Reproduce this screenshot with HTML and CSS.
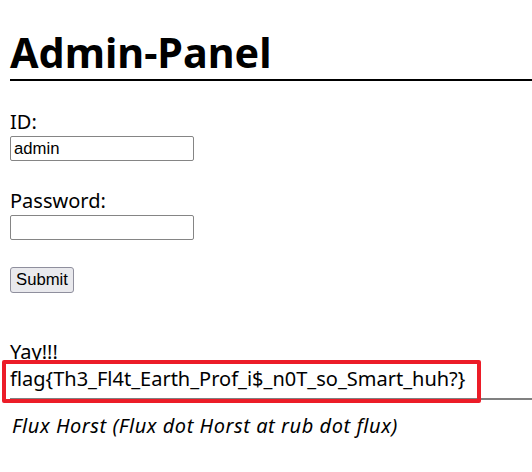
FILE: index.html
```html
<!DOCTYPE html>
<html>
<head>
<meta charset="utf-8">
<link rel="stylesheet" href="styles.css">
</head>
<body>
<h1 class="title">Admin-Panel</h1>
<form class="login">
  <label class="lbl">ID:</label>
  <input class="field" type="text" value="admin">
  <label class="lbl lbl-gap">Password:</label>
  <input class="field" type="password">
  <button class="submit" type="button">Submit</button>
</form>
<div class="result">
  <div class="line">Yay!!!</div>
  <div class="line flag">flag{Th3_Fl4t_Earth_Prof_i$_n0T_so_Smart_huh?}<span class="mark"></span></div>
</div>
<hr class="rule">
<address class="addr">Flux Horst (Flux dot Horst at rub dot flux)</address>
</body>
</html>
```
FILE: styles.css
```css
html, body {
  margin: 0;
  padding: 0;
  background: #fff;
}
body {
  padding: 0 0 0 10px;
  font-family: "Noto Sans", "Open Sans", sans-serif;
  font-size: 20px;
  color: #000;
}
.title {
  margin: 27px 0 0 0;
  font-size: 41.3px;
  font-weight: bold;
  line-height: 50px;
  padding-bottom: 2px;
  border-bottom: 2px solid #000;
}
.login {
  display: flex;
  flex-direction: column;
  align-items: flex-start;
  margin-top: 27px;
}
.lbl {
  line-height: 28px;
  height: 28px;
}
.lbl-gap {
  margin-top: 26px;
}
.field {
  box-sizing: border-box;
  width: 184px;
  height: 25px;
  margin: 0;
  border: 1px solid #858585;
  border-radius: 2px;
  padding: 0 3px;
  font-family: "Liberation Sans", Arial, sans-serif;
  font-size: 16.7px;
  color: #000;
}
.submit {
  box-sizing: border-box;
  margin-top: 27px;
  height: 26px;
  padding: 0 5px;
  background: #e9e9ed;
  border: 1px solid #8f8f9d;
  border-radius: 3px;
  font-family: "Liberation Sans", Arial, sans-serif;
  font-size: 16.7px;
  color: #000;
}
.result {
  margin-top: 46px;
}
.line {
  line-height: 26px;
}
.flag {
  position: relative;
  display: inline-block;
}
.mark {
  position: absolute;
  left: -8px;
  top: -6px;
  width: 479px;
  height: 43px;
  box-sizing: border-box;
  border: 4px solid #ec1c28;
  border-radius: 2px;
}
.rule {
  margin: 6px 0 0 0;
  border: 0;
  border-top: 2px solid #808080;
  height: 0;
}
.addr {
  margin-top: 13px;
  padding-left: 2px;
  font-style: italic;
  letter-spacing: 0.55px;
  line-height: 26px;
}
```
